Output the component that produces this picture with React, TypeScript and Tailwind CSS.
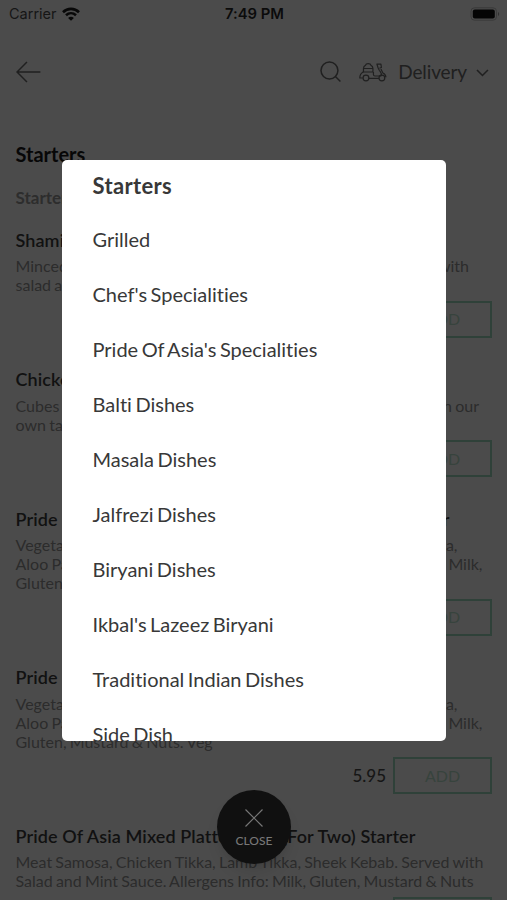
import React from "react";

type Line = [string, string?, string?];
type Item = { title: Line; lines: Line[] };

// The third entry is the width of a line whose trailing words sit at a set right edge.
const items: Item[] = [
  {
    title: ["Shami Kebab"],
    lines: [["Minced lamb", "with", "w-[453.5px]"], ["salad and sauce"]],
  },
  {
    title: ["Chicken Tikka"],
    lines: [["Cubes of chicken", "in our", "w-[463.5px]"], ["own tandoori"]],
  },
  {
    title: ["Pride Of Asia", "Starter", "w-[434px]"],
    lines: [
      ["Vegetable", "Samosa,", "w-[442px]"],
      ["Aloo Pakora", "Milk,", "w-[467px]"],
      ["Gluten, Mustard"],
    ],
  },
  {
    title: ["Pride Of Asia"],
    lines: [
      ["Vegetable", "Samosa,", "w-[442px]"],
      ["Aloo Pakora", "Milk,", "w-[467px]"],
      ["Gluten, Mustard & Nuts. Veg"],
    ],
  },
  {
    title: ["Pride Of Asia Mixed Platter", "(For Two) Starter", "w-[400px]"],
    lines: [
      ["Meat Samosa, Chicken Tikka, Lamb Tikka, Sheek Kebab. Served with"],
      ["Salad and Mint Sauce. Allergens Info: Milk, Gluten, Mustard & Nuts"],
    ],
  },
];

const menu = [
  "Grilled",
  "Chef's Specialities",
  "Pride Of Asia's Specialities",
  "Balti Dishes",
  "Masala Dishes",
  "Jalfrezi Dishes",
  "Biryani Dishes",
  "Ikbal's Lazeez Biryani",
  "Traditional Indian Dishes",
  "Side Dish",
];

function Split({ line }: { line: Line }) {
  return (
    <div className={"flex justify-between whitespace-nowrap " + (line[2] ?? "")}>
      <span>{line[0]}</span>
      {line[1] && <span>{line[1]}</span>}
    </div>
  );
}

function StatusBar() {
  return (
    <div className="flex h-7 items-center justify-between pl-[9px] pr-[7px] font-[Inter,sans-serif] text-[14.5px] text-[#161616]">
      <div className="flex w-40 items-center gap-[5px]">
        <span>Carrier</span>
        <svg width="18" height="14" viewBox="0 0 18 14" fill="none" stroke="#080808" strokeWidth="2.6">
          <path d="M1 5.2C5.5.8 12.5.8 17 5.2" />
          <path d="M4 8.3c2.9-2.7 7.1-2.7 10 0" />
          <path d="M9 13.8 6.1 10.9c1.7-1.5 4.1-1.5 5.8 0Z" fill="#080808" stroke="none" />
        </svg>
      </div>
      <span className="text-[14.8px] font-semibold text-[#0b0b0b]">7:49 PM</span>
      <div className="flex w-40 justify-end">
        <svg width="30" height="14" viewBox="0 0 30 14">
          <rect x="1" y="0.8" width="25.5" height="12.4" rx="3.5" fill="none" stroke="#3a3a3a" />
          <rect x="2.8" y="2.5" width="22" height="9" rx="2" fill="#040404" />
          <path d="M28 5v4c1.5-.6 1.5-3.4 0-4Z" fill="#303030" />
        </svg>
      </div>
    </div>
  );
}

function Header() {
  return (
    <header className="flex h-[88px] items-center pl-4 pr-[18px] text-[#202020]">
      <svg width="25" height="22" viewBox="0 0 25 22" fill="none" stroke="currentColor" strokeWidth="1.5">
        <path d="M24.5 11H1M11 1 1 11l10 10" />
      </svg>
      <svg className="ml-[279.5px]" width="22" height="22" viewBox="0 0 22 22" fill="none" stroke="currentColor" strokeWidth="1.5">
        <circle cx="9.500" cy="9.5" r="8.5" />
        <path d="m15.5 15.5 5 5" />
      </svg>
      <svg className="ml-[16.5px]" width="28" height="20" viewBox="0 0 28 20" fill="none" stroke="currentColor" strokeWidth="1.2" strokeLinejoin="round">
        <path d="M4.500 10V6.500c0-1.500.8-2.500 2-3.200C7 1 11.500 1 12 3.300c1.200.7 2 1.700 2 3.200V10M4.500 6.500H14M3.500 10H14.500" />
        <path d="M4.500 10C2 11 .8 13 .8 16h3M14.500 10v2.500c0 1 .5 1.500 1.500 1.500h6c1.500-3-.5-4-1.500-5.500-1.200-2-2-4.500-2.500-6.500h4l.5 3.500-2 .8" />
        <path d="M10 16.500h10M22 7l2 4c1.800.8 3 2 3 4.200" />
        <circle cx="7" cy="16" r="2.9" />
        <circle cx="23" cy="16" r="2.9" />
      </svg>
      <span className="ml-[11.5px] text-[19px] tracking-[-0.1px]">Delivery</span>
      <svg className="mt-0.5 ml-[9px]" width="13" height="8" viewBox="0 0 13 8" fill="none" stroke="currentColor" strokeWidth="1.6">
        <path d="m1 1 5.500 5.500L12 1" />
      </svg>
    </header>
  );
}

export default function App() {
  return (
    <div className="relative h-[900px] w-[507px] overflow-hidden bg-[#4b4b4b] font-[Lato,sans-serif] [font-variant-ligatures:none]">
      <StatusBar />
      <Header />
      <main className="pl-[15.5px]">
        <h1 className="mt-[25.5px] text-[20px] leading-6 font-bold text-[#070707]">Starters</h1>
        <p className="mt-5 text-[17px] leading-6 font-bold text-[#2d2d2d]">Starters</p>
        <div className="mt-[18px]">
          {items.map((item, i) => (
            <section key={i} className="mb-[29.5px]">
              <h2 className="text-[18px] leading-6 font-semibold tracking-[0.1px] text-[#111111]">
                <Split line={item.title} />
              </h2>
              <div className="mt-[4.5px] text-[16px] leading-[19px] text-[#2c2c2c] [word-spacing:-0.9px]">
                {item.lines.map((line, j) => (
                  <Split key={j} line={line} />
                ))}
              </div>
              <div className="mt-[6.5px] flex h-[37px] items-center justify-end gap-[7px] pr-[15px]">
                <span className="text-[17px] font-medium text-[#161616]">5.95</span>
                <span className="flex h-[37px] w-[99px] items-center justify-center border-2 border-[#2f4139] text-[16px] text-[#37433d]">
                  ADD
                </span>
              </div>
            </section>
          ))}
        </div>
      </main>

      <button className="absolute top-[790px] left-[217px] flex h-[74px] w-[74px] flex-col items-center rounded-full bg-[#101010] pt-[19px] text-[#777777] shadow-lg">
        <svg width="18" height="18" viewBox="0 0 18 18" fill="none" stroke="currentColor" strokeWidth="1.2">
          <path d="m.5.500 17 17m0-17-17 17" />
        </svg>
        <span className="mt-[5px] text-[12px] leading-[18px] font-medium">CLOSE</span>
      </button>

      <div className="absolute top-[160px] left-[62px] h-[581px] w-[384px] overflow-hidden rounded-[5px] bg-white pl-[30.5px] text-[#383838]">
        <h2 className="flex h-[51px] items-center text-[22px] font-bold tracking-[0.35px]">Starters</h2>
        <ul className="text-[20px] [word-spacing:-1.6px]">
          {menu.map((name) => (
            <li key={name} className="flex h-[55px] items-center whitespace-nowrap">
              {name}
            </li>
          ))}
        </ul>
      </div>
    </div>
  );
}
